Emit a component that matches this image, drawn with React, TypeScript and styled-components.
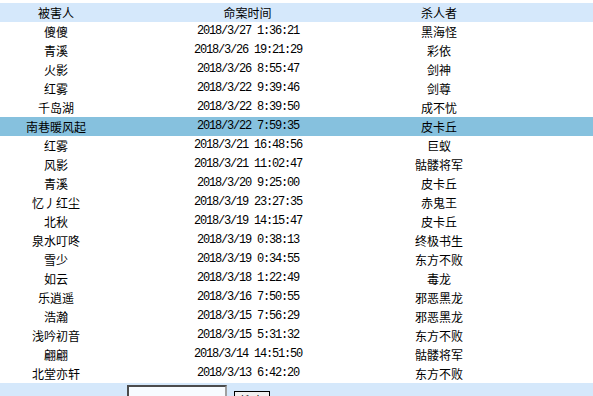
import React from "react";
import styled, { createGlobalStyle } from "styled-components";

const GlobalStyle = createGlobalStyle`
  body {
    margin: 0;
    background: #ffffff;
    font-family: "Noto Sans CJK SC", "Liberation Sans", sans-serif;
    font-size: 12px;
    color: #000000;
  }
`;

const Page = styled.div`
  padding-top: 3px;
  width: 593px;
  overflow: hidden;
`;

const Row = styled.div<{ $bg?: string }>`
  display: grid;
  grid-template-columns: 112px 271px 112px 1fr;
  height: 19px;
  line-height: 19px;
  background: ${(p) => p.$bg || "transparent"};
`;

const Cell = styled.div`
  text-align: center;
  white-space: nowrap;
  font-family: "Noto Sans CJK SC", sans-serif;
  font-size: 12px;
`;

const TimeCell = styled(Cell)`
  font-family: "Liberation Mono", "DejaVu Sans Mono", monospace;
  letter-spacing: -1.2px;
  padding-left: 1px;
`;

const Footer = styled.div`
  background: #d5e8fb;
  height: 20px;
  display: flex;
  align-items: flex-start;
  gap: 7px;
  padding: 2px 0 0 127px;
`;

const SearchInput = styled.input`
  box-sizing: border-box;
  width: 100px;
  height: 22px;
  border: 2px inset #a0a0a0;
  background: #f7fbff;
  margin: 0;
  padding: 0 2px;
`;

const SearchButton = styled.button`
  margin-top: 6px;
  height: 20px;
  border: 1px solid #000000;
  background: #f0f0f0;
  font-family: "Noto Sans CJK SC", sans-serif;
  font-size: 12px;
  line-height: 16px;
  padding: 0 5px;
`;

const rows: [string, string, string][] = [
  ["傻傻", "2018/3/27 1:36:21", "黑海怪"],
  ["青溪", "2018/3/26 19:21:29", "彩依"],
  ["火影", "2018/3/26 8:55:47", "剑神"],
  ["红雾", "2018/3/22 9:39:46", "剑尊"],
  ["千岛湖", "2018/3/22 8:39:50", "成不忧"],
  ["南巷暖风起", "2018/3/22 7:59:35", "皮卡丘"],
  ["红雾", "2018/3/21 16:48:56", "巨蚁"],
  ["风影", "2018/3/21 11:02:47", "骷髅将军"],
  ["青溪", "2018/3/20 9:25:00", "皮卡丘"],
  ["忆丿红尘", "2018/3/19 23:27:35", "赤鬼王"],
  ["北秋", "2018/3/19 14:15:47", "皮卡丘"],
  ["泉水叮咚", "2018/3/19 0:38:13", "终极书生"],
  ["雪少", "2018/3/19 0:34:55", "东方不败"],
  ["如云", "2018/3/18 1:22:49", "毒龙"],
  ["乐逍遥", "2018/3/16 7:50:55", "邪恶黑龙"],
  ["浩瀚", "2018/3/15 7:56:29", "邪恶黑龙"],
  ["浅吟初音", "2018/3/15 5:31:32", "东方不败"],
  ["翩翩", "2018/3/14 14:51:50", "骷髅将军"],
  ["北堂亦轩", "2018/3/13 6:42:20", "东方不败"],
];

const App = () => {
  return (
    <Page>
      <GlobalStyle />
      <Row $bg="#d5e8fb">
        <Cell>被害人</Cell>
        <Cell>命案时间</Cell>
        <Cell>杀人者</Cell>
        <Cell />
      </Row>
      {rows.map(([victim, time, killer], i) => (
        <Row key={i} $bg={i === 5 ? "#86c1de" : undefined}>
          <Cell>{victim}</Cell>
          <TimeCell>{time}</TimeCell>
          <Cell>{killer}</Cell>
          <Cell />
        </Row>
      ))}
      <Footer>
        <SearchInput type="text" />
        <SearchButton>搜索</SearchButton>
      </Footer>
    </Page>
  );
};

export default App;
